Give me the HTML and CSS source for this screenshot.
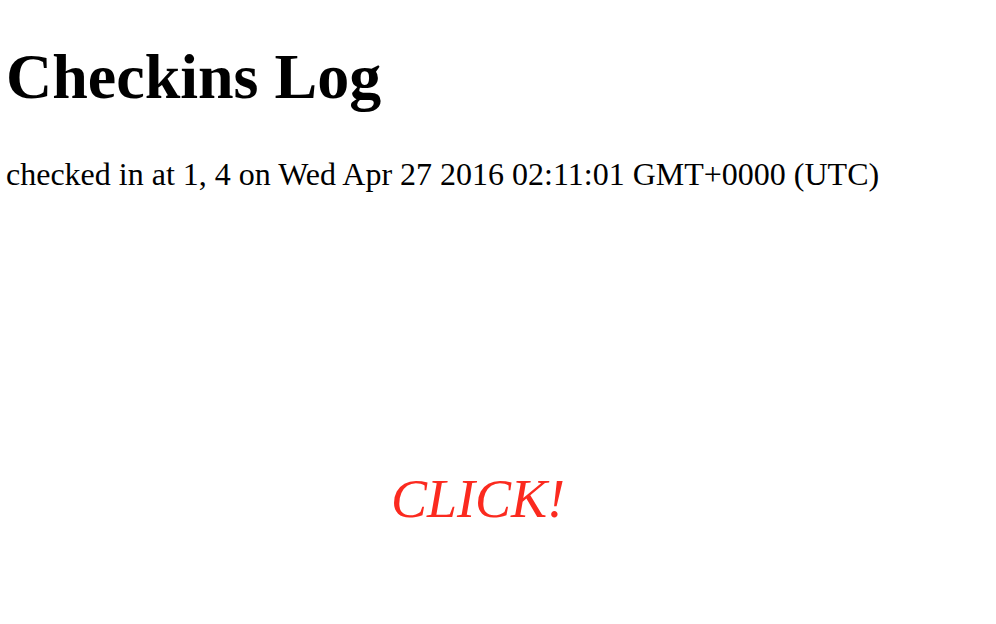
FILE: index.html
```html
<!DOCTYPE html>
<html>
<head>
<meta charset="utf-8">
<title>Checkins Log</title>
<link rel="stylesheet" href="styles.css">
</head>
<body>
<h1 class="title">Checkins Log</h1>
<p class="entry">checked in at 1, 4 on Wed Apr 27 2016 02:11:01 GMT+0000 (UTC)</p>
<div class="click-wrap"><span class="click">CLICK!</span></div>
</body>
</html>
```
FILE: styles.css
```css
html, body {
  margin: 0;
  padding: 0;
  background: #ffffff;
}
body {
  padding: 0 6px;
  font-family: "Liberation Serif", "Times New Roman", serif;
  color: #000000;
}
.title {
  margin: 40px 0 0;
  font-size: 64px;
  font-weight: bold;
  line-height: normal;
}
.entry {
  margin: 42px 0 0;
  font-size: 32px;
  line-height: normal;
}
.click-wrap {
  margin-top: 275px;
  width: 944px;
  text-align: center;
}
.click {
  font-size: 54px;
  font-style: italic;
  color: #fb2a1f;
  line-height: normal;
}
```
